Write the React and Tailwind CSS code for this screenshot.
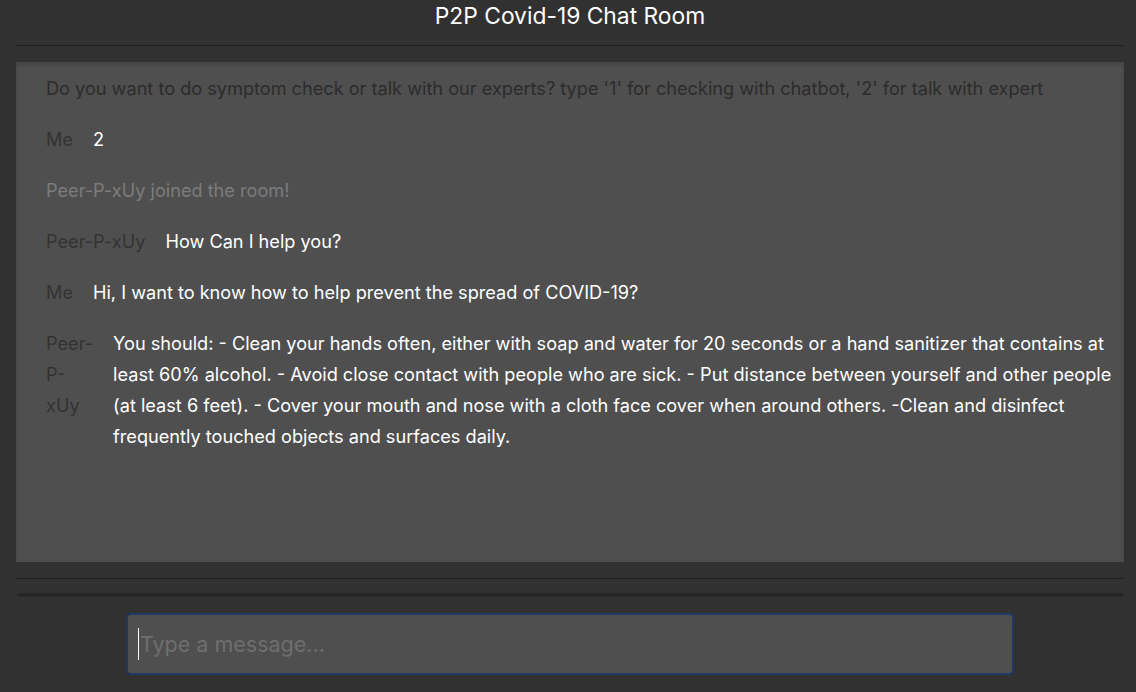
import React from 'react';

const messages = [
  { type: 'system', dark: true, text: "Do you want to do symptom check or talk with our experts? type '1' for checking with chatbot, '2' for talk with expert" },
  { type: 'msg', from: 'Me', text: '2' },
  { type: 'system', text: 'Peer-P-xUy joined the room!' },
  { type: 'msg', from: 'Peer-P-xUy', text: 'How Can I help you?' },
  { type: 'msg', from: 'Me', text: 'Hi, I want to know how to help prevent the spread of COVID-19?' },
  {
    type: 'msg',
    from: 'Peer-P-xUy',
    text: 'You should: - Clean your hands often, either with soap and water for 20 seconds or a hand sanitizer that contains at least 60% alcohol. - Avoid close contact with people who are sick. - Put distance between yourself and other people (at least 6 feet). - Cover your mouth and nose with a cloth face cover when around others. -Clean and disinfect frequently touched objects and surfaces daily.',
  },
];

function MessageRow({ message }) {
  if (message.type === 'system') {
    return (
      <div className={message.dark ? 'text-[#2c2c2c]' : 'text-[#7c7c7c]'}>{message.text}</div>
    );
  }
  return (
    <div className="flex gap-5">
      <div className="text-[#333333]">{message.from}</div>
      <div className="text-white">{message.text}</div>
    </div>
  );
}

export default function App() {
  return (
    <div
      className="w-[1136px] h-[692px] bg-[#313131] overflow-hidden"
      style={{ fontFamily: 'Inter, "Noto Sans", sans-serif' }}
    >
      <div className="ml-4 w-[1108px] flex flex-col">
        <div className="h-[32px] flex items-center justify-center text-white text-[22.8px]">
          P2P Covid-19 Chat Room
        </div>
        <div className="mt-[13px] border-t border-[#1f1f1f]" />
        <div className="mt-4 h-[500px] bg-[#4f4f4f] shadow-[inset_0_3px_4px_rgba(0,0,0,0.15)] pl-[30px] pr-[8px] pt-[11px] text-[18.15px] leading-[31px] flex flex-col gap-5">
          {messages.map((m, i) => (
            <MessageRow key={i} message={m} />
          ))}
        </div>
        <div className="mt-4 border-t border-[#1f1f1f]" />
        <div className="mx-[2px] mt-[14px] h-[2px] bg-[#262626] shadow-[0_1px_2px_rgba(0,0,0,0.4)]" />
        <div className="flex justify-center mt-[18px]">
          <div className="w-[888px] h-[62px] border-2 border-[#1f3868] rounded-[5px] bg-[#4f4f4f] flex items-center px-[10px]">
            <input
              className="w-full bg-transparent outline-none text-[21.5px] text-white placeholder:text-[#6e6e6e] border-l border-white pl-[1px]"
              placeholder="Type a message..."
            />
          </div>
        </div>
      </div>
    </div>
  );
}
